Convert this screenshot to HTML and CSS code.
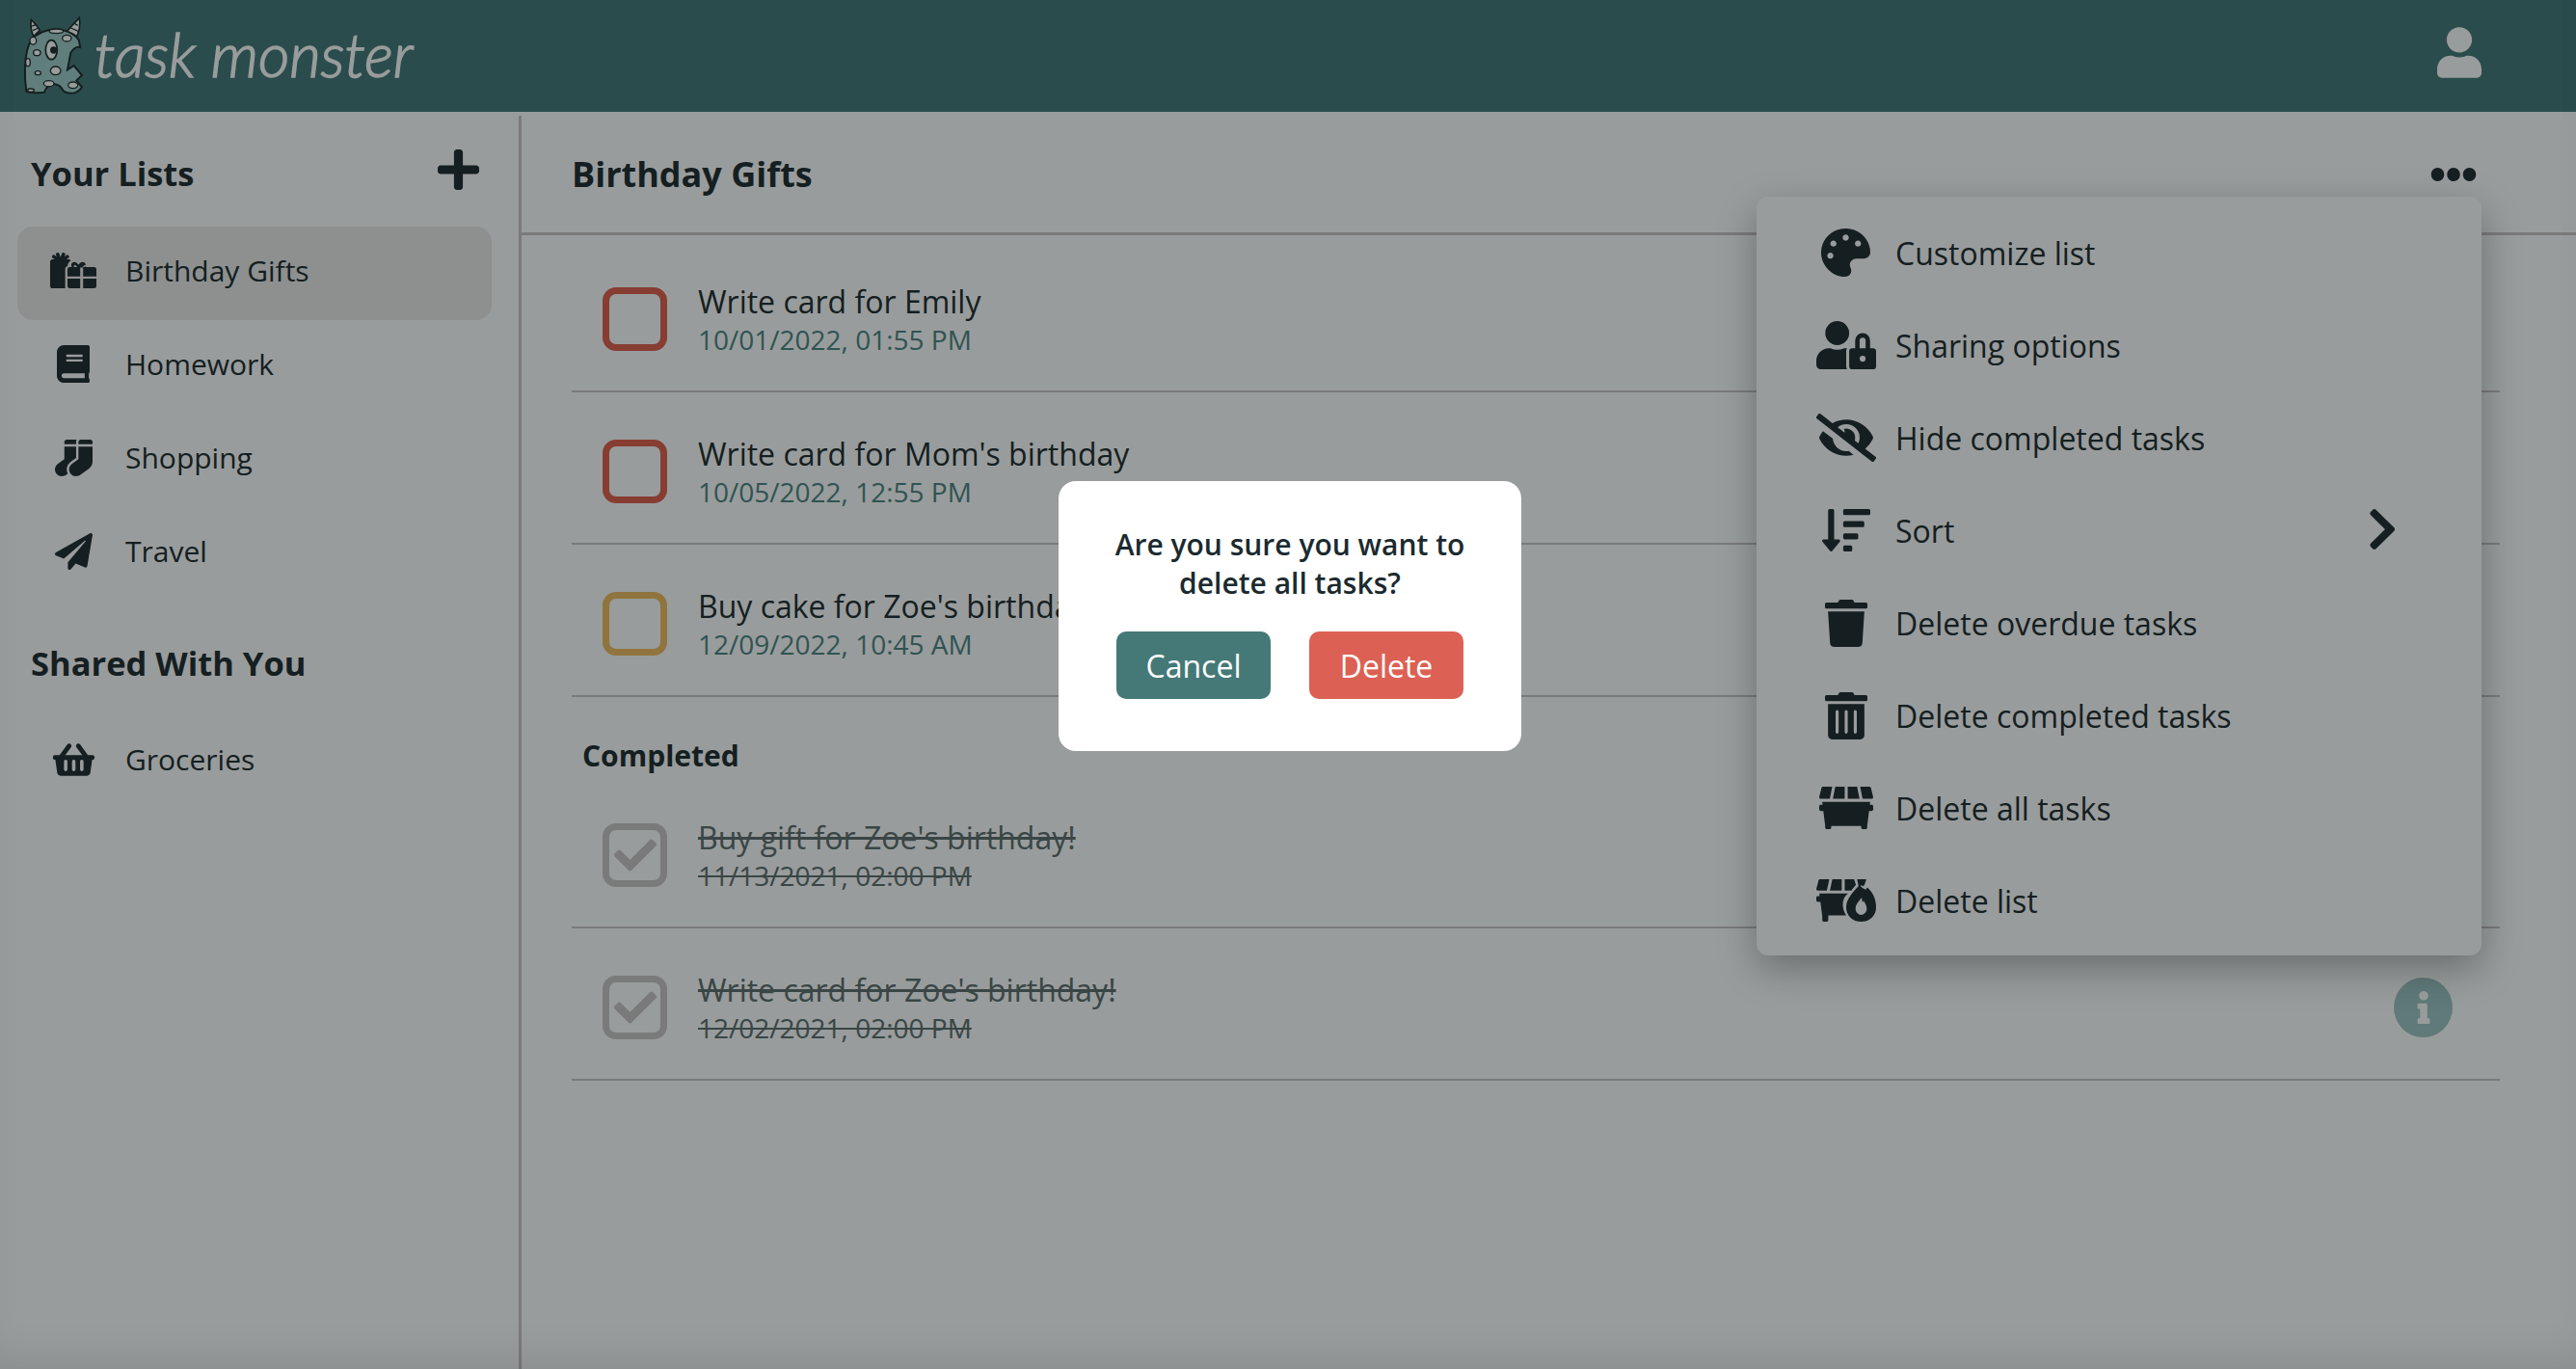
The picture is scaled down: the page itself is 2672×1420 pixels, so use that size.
FILE: index.html
```html
<!DOCTYPE html>
<html lang="en">
<head>
<meta charset="utf-8">
<title>Task Monster</title>
<link rel="stylesheet" href="styles.css">
</head>
<body>
<div class="app">
  <header class="topbar">
    <div class="brand">
      <svg class="monster" viewBox="0 0 240 270">
        <path class="m-spot m-line" d="M37 22C34 40 38 65 45 74L64 55C56 42 46 30 37 22Z"/>
        <path class="m-spot m-line" d="M187 16C170 35 155 50 146 62L175 80C188 60 191 40 187 16Z"/>
        <path class="m-stripe" d="M40 42L52 38M42 56L60 48M172 34L182 40M160 48L184 58"/>
        <path class="m-body" d="M30 100C40 75 60 62 90 55C120 48 165 55 185 85L190 108C178 104 168 112 160 125L150 178L170 165L195 195L178 212L195 232C185 250 160 258 138 245C130 232 125 225 110 223C95 222 85 228 78 248C60 250 35 252 22 245C15 200 15 140 30 100Z"/>
        <ellipse class="m-spot m-line2" cx="115" cy="58" rx="22" ry="7"/>
        <ellipse class="m-spot m-line2" cx="148" cy="80" rx="14" ry="10"/>
        <ellipse class="m-spot m-line2" cx="43" cy="88" rx="10" ry="12"/>
        <ellipse class="m-spot m-line2" cx="55" cy="125" rx="11" ry="9"/>
        <ellipse class="m-spot m-line2" cx="58" cy="188" rx="9" ry="6"/>
        <ellipse class="m-spot m-line2" cx="113" cy="181" rx="16" ry="13"/>
        <ellipse class="m-spot m-line2" cx="27" cy="155" rx="7" ry="12"/>
        <ellipse class="m-spot m-line2" cx="92" cy="221" rx="16" ry="9"/>
        <ellipse class="m-spot m-line2" cx="167" cy="226" rx="15" ry="10"/>
        <ellipse class="m-spot m-line2" cx="36" cy="242" rx="10" ry="5"/>
        <ellipse class="m-spot m-line" cx="100" cy="116" rx="18" ry="30"/>
        <circle class="m-pupil" cx="107" cy="117" r="11"/>
      </svg>
      <span class="wordmark">task monster</span>
    </div>
    <svg class="ic-user" viewBox="0 0 448 512"><path d="M224 256c70.7 0 128-57.3 128-128S294.7 0 224 0 96 57.3 96 128s57.3 128 128 128zm89.6 32h-16.7c-22.2 10.2-46.9 16-72.9 16s-50.6-5.8-72.9-16h-16.7C60.2 288 0 348.2 0 422.4V464c0 26.5 21.5 48 48 48h352c26.5 0 48-21.5 48-48v-41.6c0-74.2-60.2-134.4-134.4-134.4z"/></svg>
  </header>

  <div class="workspace">
    <aside class="sidebar">
      <div class="side-head">
        <h2 class="side-title">Your Lists</h2>
        <svg class="ic-plus" viewBox="0 0 448 512" preserveAspectRatio="none"><path d="M416 208H272V64c0-17.67-14.33-32-32-32h-32c-17.67 0-32 14.33-32 32v144H32c-17.67 0-32 14.33-32 32v32c0 17.67 14.33 32 32 32h144v144c0 17.67 14.33 32 32 32h32c17.67 0 32-14.33 32-32V304h144c17.67 0 32-14.33 32-32v-32c0-17.67-14.33-32-32-32z"/></svg>
      </div>
      <div class="side-row is-active">
        <span class="side-icon"><svg class="ic-gifts" viewBox="0 0 640 512" preserveAspectRatio="none">
          <path d="M240.6 194.1c1.9-30.8 17.3-61.2 44-79.8C279.4 103.5 268.7 96 256 96h-29.4l30.7-22c7.2-5.1 8.9-15.1 3.7-22.3l-9.3-13c-5.1-7.2-15.1-8.9-22.3-3.7l-32 22.9 11.5-30.6c3.1-8.3-1.1-17.5-9.4-20.6l-15-5.6c-8.3-3.1-17.5 1.1-20.6 9.4l-19.9 53-19.9-53c-3.1-8.3-12.3-12.5-20.6-9.4l-15 5.6c-8.3 3.1-12.5 12.3-9.4 20.6l11.5 30.6-32-22.9c-7.2-5.1-17.2-3.5-22.3 3.7l-9.3 13c-5.1 7.2-3.5 17.2 3.7 22.3l30.7 22H32c-17.7 0-32 14.3-32 32v352c0 17.7 14.3 32 32 32h178.3c-1.4-5.1-2.3-10.4-2.3-16V240c0-20 12-37 32.6-45.9z"/>
          <path fill-rule="evenodd" d="M240 342V240a32 32 0 0 1 32-32h28c-8-14-10-30-4-46 10-26 44-36 68-16l28 26 28-26c24-20 58-10 68 16 6 16 4 32-4 46h124a32 32 0 0 1 32 32v102H456V216h-40v126zM344 208h32l-24-24c-10-8-24 0-24 12 0 5 4 9 16 12zM480 208h-32l24-24c10-8 24 0 24 12 0 5-4 9-16 12z"/>
          <path d="M240 374h176v138H272a32 32 0 0 1-32-32zM456 374h184v106a32 32 0 0 1-32 32H456z"/>
        </svg></span>
        <span class="side-label">Birthday Gifts</span>
      </div>
      <div class="side-row">
        <span class="side-icon"><svg class="ic-book" viewBox="0 0 448 512" preserveAspectRatio="none"><path d="M448 360V24c0-13.3-10.7-24-24-24H96C43 0 0 43 0 96v320c0 53 43 96 96 96h328c13.3 0 24-10.7 24-24v-16c0-7.5-3.5-14.3-8.9-18.7-4.2-15.4-4.2-59.3 0-74.7 5.4-4.3 8.9-11.1 8.9-18.6zM128 134c0-3.3 2.7-6 6-6h212c3.3 0 6 2.7 6 6v20c0 3.3-2.7 6-6 6H134c-3.3 0-6-2.7-6-6v-20zm0 64c0-3.3 2.7-6 6-6h212c3.3 0 6 2.7 6 6v20c0 3.3-2.7 6-6 6H134c-3.3 0-6-2.7-6-6v-20zm253.4 250H96c-17.7 0-32-14.3-32-32 0-17.6 14.4-32 32-32h285.4c-1.9 17.1-1.9 46.9 0 64z"/></svg></span>
        <span class="side-label">Homework</span>
      </div>
      <div class="side-row">
        <span class="side-icon"><svg class="ic-socks" viewBox="0 0 512 512" preserveAspectRatio="none"><path d="M214.66 311.01L288 256V96H128v176l-86.65 64.61c-39.4 29.56-53.86 84.42-29.21 127.06C30.39 495.25 63.27 512 96.08 512c20.03 0 40.25-6.25 57.52-19.2l21.86-16.39c-29.85-55.38-13.54-125.84 39.2-165.4zM288 32c0-11.05 3.07-21.3 8.02-30.38C293.4.92 290.85 0 288 0H160c-17.67 0-32 14.33-32 32v32h160V32zM480 0H352c-17.67 0-32 14.33-32 32v32h192V32c0-17.67-14.33-32-32-32zM320 272l-86.13 64.61c-39.4 29.56-53.86 84.42-29.21 127.06 18.25 31.58 50.61 48.33 83.42 48.33 20.03 0 40.25-6.25 57.52-19.2l115.2-86.4A127.997 127.997 0 0 0 512 304V96H320v176z"/></svg></span>
        <span class="side-label">Shopping</span>
      </div>
      <div class="side-row">
        <span class="side-icon"><svg class="ic-plane" viewBox="0 0 512 512" preserveAspectRatio="none"><path d="M476 3.2L12.5 270.6c-18.1 10.4-15.8 35.6 2.2 43.2L121 358.4l287.3-253.2c5.5-4.9 13.3 2.6 8.6 8.3L176 407v80.5c0 23.6 28.5 32.9 42.5 15.8L282 426l124.6 52.2c14.2 6 30.4-2.9 33-18.2l72-432C515 7.8 493.3-6.8 476 3.2z"/></svg></span>
        <span class="side-label">Travel</span>
      </div>
      <div class="side-head side-head-shared">
        <h2 class="side-title">Shared With You</h2>
      </div>
      <div class="side-row">
        <span class="side-icon"><svg class="ic-basket" viewBox="0 0 576 512" preserveAspectRatio="none"><path d="M576 216v16c0 13.255-10.745 24-24 24h-8l-26.113 182.788C514.509 462.435 494.257 480 470.37 480H105.63c-23.887 0-44.139-17.565-47.518-41.212L32 256h-8c-13.255 0-24-10.745-24-24v-16c0-13.255 10.745-24 24-24h67.341l106.78-146.821c10.395-14.292 30.407-17.453 44.701-7.058 14.293 10.395 17.453 30.408 7.058 44.701L170.477 192h235.046L326.12 82.821c-10.395-14.292-7.234-34.306 7.059-44.701 14.291-10.395 34.306-7.235 44.701 7.058L484.659 192H552c13.255 0 24 10.745 24 24zM312 392V280c0-13.255-10.745-24-24-24s-24 10.745-24 24v112c0 13.255 10.745 24 24 24s24-10.745 24-24zm112 0V280c0-13.255-10.745-24-24-24s-24 10.745-24 24v112c0 13.255 10.745 24 24 24s24-10.745 24-24zm-224 0V280c0-13.255-10.745-24-24-24s-24 10.745-24 24v112c0 13.255 10.745 24 24 24s24-10.745 24-24z"/></svg></span>
        <span class="side-label">Groceries</span>
      </div>
    </aside>

    <main class="main">
      <div class="main-head">
        <h1 class="main-title">Birthday Gifts</h1>
        <svg class="ic-dots" viewBox="0 0 512 144" preserveAspectRatio="none"><path d="M328 72c0 39.8-32.2 72-72 72s-72-32.2-72-72 32.2-72 72-72 72 32.2 72 72zM432 0c-39.8 0-72 32.2-72 72s32.2 72 72 72 72-32.2 72-72-32.2-72-72-72zM80 0C40.2 0 8 32.2 8 72s32.2 72 72 72 72-32.2 72-72S119.8 0 80 0z"/></svg>
      </div>
      <div class="tasks">
        <div class="task">
          <span class="box box-red"></span>
          <div class="task-text"><div class="task-name">Write card for Emily</div><div class="task-date">10/01/2022, 01:55 PM</div></div>
        </div>
        <div class="task">
          <span class="box box-red"></span>
          <div class="task-text"><div class="task-name">Write card for Mom's birthday</div><div class="task-date">10/05/2022, 12:55 PM</div></div>
        </div>
        <div class="task">
          <span class="box box-yellow"></span>
          <div class="task-text"><div class="task-name">Buy cake for Zoe's birthday</div><div class="task-date">12/09/2022, 10:45 AM</div></div>
        </div>
        <h3 class="done-title">Completed</h3>
        <div class="task is-done">
          <span class="box box-done"><svg class="ic-check" viewBox="0 0 512 512"><path d="M173.898 439.404l-166.4-166.4c-9.997-9.997-9.997-26.206 0-36.204l36.203-36.204c9.997-9.998 26.207-9.998 36.204 0L192 312.69 432.095 72.596c9.997-9.997 26.207-9.997 36.204 0l36.203 36.204c9.997 9.997 9.997 26.206 0 36.204l-294.4 294.401c-9.998 9.997-26.207 9.997-36.204-.001z"/></svg></span>
          <div class="task-text"><div class="task-name">Buy gift for Zoe's birthday!</div><div class="task-date">11/13/2021, 02:00 PM</div></div>
        </div>
        <div class="task is-done">
          <span class="box box-done"><svg class="ic-check" viewBox="0 0 512 512"><path d="M173.898 439.404l-166.4-166.4c-9.997-9.997-9.997-26.206 0-36.204l36.203-36.204c9.997-9.998 26.207-9.998 36.204 0L192 312.69 432.095 72.596c9.997-9.997 26.207-9.997 36.204 0l36.203 36.204c9.997 9.997 9.997 26.206 0 36.204l-294.4 294.401c-9.998 9.997-26.207 9.997-36.204-.001z"/></svg></span>
          <div class="task-text"><div class="task-name">Write card for Zoe's birthday!</div><div class="task-date">12/02/2021, 02:00 PM</div></div>
          <span class="info"><svg class="ic-info" viewBox="0 0 192 512"><path d="M20 424.229h20V279.771H20c-11.046 0-20-8.954-20-20V212c0-11.046 8.954-20 20-20h112c11.046 0 20 8.954 20 20v212.229h20c11.046 0 20 8.954 20 20V492c0 11.046-8.954 20-20 20H20c-11.046 0-20-8.954-20-20v-47.771c0-11.046 8.954-20 20-20zM96 0C56.235 0 24 32.235 24 72s32.235 72 72 72 72-32.235 72-72S135.764 0 96 0z"/></svg></span>
        </div>
      </div>
    </main>
  </div>

  <nav class="menu">
    <div class="menu-row"><span class="menu-icon"><svg class="mi-palette" viewBox="0 0 512 512" preserveAspectRatio="none"><path d="M204.3 5C104.9 24.4 24.8 104.3 5.2 203.4c-37 187 131.7 326.4 258.8 306.7 41.2-6.4 61.4-54.6 42.5-91.7-23.1-45.4 9.9-98.4 60.9-98.4h79.7c35.8 0 64.8-29.6 64.9-65.3C511.5 97.1 368.1-26.9 204.3 5zM96 320c-17.7 0-32-14.3-32-32s14.3-32 32-32 32 14.3 32 32-14.3 32-32 32zm32-128c-17.7 0-32-14.3-32-32s14.3-32 32-32 32 14.3 32 32-14.3 32-32 32zm128-64c-17.7 0-32-14.3-32-32s14.3-32 32-32 32 14.3 32 32-14.3 32-32 32zm128 64c-17.7 0-32-14.3-32-32s14.3-32 32-32 32 14.3 32 32-14.3 32-32 32z"/></svg></span><span>Customize list</span></div>
    <div class="menu-row"><span class="menu-icon"><svg class="mi-wide" viewBox="0 0 640 512" preserveAspectRatio="none"><path d="M224 256A128 128 0 1 0 96 128a128 128 0 0 0 128 128zm96 64a63.08 63.08 0 0 1 8.1-30.5c-4.8-.5-9.5-1.5-14.5-1.5h-16.7a174.08 174.08 0 0 1-145.8 0h-16.7A134.43 134.43 0 0 0 0 422.4V464a48 48 0 0 0 48 48h280.9a63.54 63.54 0 0 1-8.9-32zm288-32h-32v-80a80 80 0 0 0-160 0v80h-32a32 32 0 0 0-32 32v160a32 32 0 0 0 32 32h224a32 32 0 0 0 32-32V320a32 32 0 0 0-32-32zM496 432a32 32 0 1 1 32-32 32 32 0 0 1-32 32zm32-144h-64v-80a32 32 0 0 1 64 0z"/></svg></span><span>Sharing options</span></div>
    <div class="menu-row"><span class="menu-icon"><svg class="mi-wide" viewBox="0 0 640 512" preserveAspectRatio="none"><path d="M320 400c-75.85 0-137.25-58.71-142.9-133.11L72.2 185.82c-13.79 17.3-26.48 35.59-36.72 55.59a32.35 32.35 0 0 0 0 29.19C89.71 376.41 197.07 448 320 448c26.91 0 52.87-4 77.89-10.46L346 397.39a144.13 144.13 0 0 1-26 2.61zm313.82 58.1l-110.55-85.44a331.25 331.25 0 0 0 81.25-102.07 32.35 32.35 0 0 0 0-29.19C550.29 135.59 442.93 64 320 64a308.15 308.15 0 0 0-147.32 37.7L45.46 3.37A16 16 0 0 0 23 6.18L3.37 31.45A16 16 0 0 0 6.18 53.9l588.36 454.73a16 16 0 0 0 22.46-2.81l19.64-25.27a16 16 0 0 0-2.82-22.45zm-183.72-142l-39.3-30.38A94.75 94.75 0 0 0 416 256a94.76 94.76 0 0 0-121.31-92.21A47.65 47.65 0 0 1 304 192a46.64 46.64 0 0 1-1.54 10l-73.61-56.89A142.31 142.31 0 0 1 320 112a143.92 143.92 0 0 1 144 144c0 21.63-5.29 41.79-13.9 60.11z"/></svg></span><span>Hide completed tasks</span></div>
    <div class="menu-row"><span class="menu-icon"><svg class="mi-sort" viewBox="0 32 512 448" preserveAspectRatio="none"><path d="M304 416h-64a16 16 0 0 0-16 16v32a16 16 0 0 0 16 16h64a16 16 0 0 0 16-16v-32a16 16 0 0 0-16-16zm-128-64h-48V48a16 16 0 0 0-16-16H80a16 16 0 0 0-16 16v304H16c-14.19 0-21.37 17.24-11.29 27.31l80 96a16 16 0 0 0 22.62 0l80-96C197.35 369.26 190.22 352 176 352zm256-192H240a16 16 0 0 0-16 16v32a16 16 0 0 0 16 16h192a16 16 0 0 0 16-16v-32a16 16 0 0 0-16-16zm-64 128H240a16 16 0 0 0-16 16v32a16 16 0 0 0 16 16h128a16 16 0 0 0 16-16v-32a16 16 0 0 0-16-16zM496 32H240a16 16 0 0 0-16 16v32a16 16 0 0 0 16 16h256a16 16 0 0 0 16-16V48a16 16 0 0 0-16-16z"/></svg></span><span class="menu-grow">Sort</span><svg class="mi-chevron" viewBox="24 37 268 438" preserveAspectRatio="none"><path d="M285.476 272.971L91.132 467.314c-9.373 9.373-24.569 9.373-33.941 0l-22.667-22.667c-9.357-9.357-9.375-24.522-.04-33.901L188.505 256 34.484 101.255c-9.335-9.379-9.317-24.544.04-33.901l22.667-22.667c9.373-9.373 24.569-9.373 33.941 0L285.475 239.03c9.373 9.372 9.373 24.568.001 33.941z"/></svg></div>
    <div class="menu-row"><span class="menu-icon"><svg class="mi-trash" viewBox="0 0 448 512" preserveAspectRatio="none"><path d="M432 32H312l-9.4-18.7A24 24 0 0 0 281.1 0H166.8a23.72 23.72 0 0 0-21.4 13.3L136 32H16A16 16 0 0 0 0 48v32a16 16 0 0 0 16 16h416a16 16 0 0 0 16-16V48a16 16 0 0 0-16-16zM53.2 467a48 48 0 0 0 47.9 45h245.8a48 48 0 0 0 47.9-45L416 128H32z"/></svg></span><span>Delete overdue tasks</span></div>
    <div class="menu-row"><span class="menu-icon"><svg class="mi-trash" viewBox="0 0 448 512" preserveAspectRatio="none"><path d="M32 464a48 48 0 0 0 48 48h288a48 48 0 0 0 48-48V128H32zm272-256a16 16 0 0 1 32 0v224a16 16 0 0 1-32 0zm-96 0a16 16 0 0 1 32 0v224a16 16 0 0 1-32 0zm-96 0a16 16 0 0 1 32 0v224a16 16 0 0 1-32 0zM432 32H312l-9.4-18.7A24 24 0 0 0 281.1 0H166.8a23.72 23.72 0 0 0-21.4 13.3L136 32H16A16 16 0 0 0 0 48v32a16 16 0 0 0 16 16h416a16 16 0 0 0 16-16V48a16 16 0 0 0-16-16z"/></svg></span><span>Delete completed tasks</span></div>
    <div class="menu-row"><span class="menu-icon"><svg class="mi-dumpster" viewBox="0 32 576 448" preserveAspectRatio="none"><path d="M560 160c10.4 0 18-9.8 15.5-19.9l-24-96C549.7 37 543.3 32 536 32h-98.9l25.6 128H560zM272 32H171.5l-25.6 128H272V32zm132.5 0H304v128h126.1L404.5 32zM16 160h97.3l25.6-128H40c-7.3 0-13.7 5-15.5 12.1l-24 96C-2 150.2 5.6 160 16 160zm544 64h-20l4-32H32l4 32H16c-8.8 0-16 7.2-16 16v32c0 8.8 7.2 16 16 16h28l20 160v16c0 8.8 7.2 16 16 16h32c8.8 0 16-7.2 16-16v-16h320v16c0 8.8 7.2 16 16 16h32c8.8 0 16-7.2 16-16v-16l20-160h28c8.8 0 16-7.2 16-16v-32c0-8.8-7.2-16-16-16z"/></svg></span><span>Delete all tasks</span></div>
    <div class="menu-row"><span class="menu-icon"><svg class="mi-fire" viewBox="0 32 640 480" preserveAspectRatio="none">
      <path d="M16 160h97.3l25.6-128H40c-7.3 0-13.7 5-15.5 12.1l-24 96C-2 150.2 5.6 160 16 160zM272 32H171.5l-25.6 128H272zM404.5 32H304v128h70c15-20 35-45 50-66zM536 32h-98.9l20 100c8-6 18-20 26-34l14 12 8-6 8 0z"/>
      <path d="M32 192H340C305 220 290 255 285 295C280 340 290 400 320 440H128v56a16 16 0 0 1-16 16H80a16 16 0 0 1-16-16v-40L44 288H16a16 16 0 0 1-16-16v-32a16 16 0 0 1 16-16h20z"/>
      <path fill-rule="evenodd" d="M470 90C475 130 500 130 530 150L545 125C600 170 640 250 640 350C640 440 575 512 480 512C385 512 320 440 320 350C320 250 400 170 470 90zM485 240C455 285 420 315 420 365C420 405 450 435 480 435C510 435 540 405 540 365C540 325 520 305 508 275L494 295z"/>
    </svg></span><span>Delete list</span></div>
  </nav>

  <div class="backdrop"></div>

  <section class="dialog">
    <p class="dialog-text">Are you sure you want to delete all tasks?</p>
    <div class="dialog-actions">
      <button class="btn btn-cancel">Cancel</button>
      <button class="btn btn-delete">Delete</button>
    </div>
  </section>
</div>
</body>
</html>
```
FILE: styles.css
```css
* { box-sizing: border-box; }
html, body { margin: 0; padding: 0; }
body { background: #fff; color: #242f33; font-family: "Open Sans", "Liberation Sans", sans-serif; overflow: hidden; }
svg { display: block; fill: currentColor; }
h1, h2, h3, p { margin: 0; }

.app { position: relative; width: 2672px; height: 1420px; display: flex; flex-direction: column; overflow: hidden; }

.topbar { height: 116px; flex: none; background: #497b7b; color: #fff; display: flex; align-items: center; justify-content: space-between; padding-right: 98px; }
.brand { display: flex; align-items: center; padding-left: 20px; }
.monster { width: 80px; height: 90px; }
.m-body { fill: #9fcdca; stroke: #242f30; stroke-width: 6; }
.m-spot { fill: #fff; }
.m-line { stroke: #242f30; stroke-width: 5; }
.m-line2 { stroke: #242f30; stroke-width: 4; }
.m-stripe { fill: none; stroke: #242f30; stroke-width: 4; }
.m-pupil { fill: #242f30; }
.wordmark { font-family: "Lato", sans-serif; font-style: italic; font-weight: 300; font-size: 63px; line-height: 1; margin-left: -2px; padding-bottom: 6px; color: #fff; -webkit-text-stroke: 1.5px #fff; }
.ic-user { width: 46px; height: 53px; margin-top: -8px; }

.workspace { flex: 1; display: flex; min-height: 0; }

.sidebar { width: 541px; flex: none; margin-top: 4px; border-right: 3px solid #cbc6c9; }
.side-head { height: 115px; display: flex; align-items: center; justify-content: space-between; padding: 4px 41px 0 32px; }
.side-head-shared { height: 119px; padding-top: 10px; }
.side-title { font-size: 34.5px; font-weight: 700; line-height: 1.2; }
.ic-plus { width: 43px; height: 48px; margin-top: -7px; }
.side-row { height: 97px; width: 492px; margin-left: 18px; padding: 0 0 6px 17px; display: flex; align-items: center; border-radius: 16px; }
.side-row.is-active { background: #edebe9; }
.side-icon { width: 82px; margin-right: 13px; flex: none; display: flex; justify-content: center; }
.side-label { font-size: 30px; }
.ic-gifts { width: 48px; height: 37px; }
.ic-book { width: 34px; height: 39px; }
.ic-socks { width: 39px; height: 38px; }
.ic-plane { width: 39px; height: 38px; }
.ic-basket { width: 43px; height: 38px; }

.main { flex: 1; min-width: 0; display: flex; flex-direction: column; }
.main-head { height: 124px; margin-top: 4px; flex: none; border-bottom: 3px solid #cbc6c9; display: flex; align-items: center; justify-content: space-between; padding: 0 103px 0 52px; }
.main-title { font-size: 36px; font-weight: 700; line-height: 1.2; }
.ic-dots { width: 48px; height: 14px; }

.tasks { padding-top: 5px; margin: 0 79px 0 52px; }
.task { height: 158px; padding: 8px 49px 0 32px; display: flex; align-items: center; border-bottom: 2px solid #cbc6c9; }
.box { width: 67px; height: 66px; flex: none; border: 7px solid; border-radius: 14px; margin-right: 32px; display: flex; align-items: center; justify-content: center; }
.box-red { border-color: #e2614f; }
.box-yellow { border-color: #f0bc62; }
.box-done { border-color: #cbc6c9; color: #cbc6c9; }
.ic-check { width: 44px; height: 44px; flex: none; }
.task-text { flex: 1; min-width: 0; white-space: nowrap; padding-top: 3px; }
.task-name { font-size: 32px; line-height: 40px; }
.task-date { font-size: 28px; line-height: 39px; color: #4f8784; }
.is-done .task-name, .is-done .task-date { color: #617171; text-decoration: line-through; }
.done-title { height: 82px; padding: 38px 0 0 11px; font-size: 30px; font-weight: 700; line-height: 45px; }
.info { width: 61px; height: 62px; flex: none; border-radius: 50%; background: #9ec6c3; color: #fff; display: flex; align-items: center; justify-content: center; }
.ic-info { width: 14px; height: 34px; }

.menu { position: absolute; left: 1822px; top: 204px; width: 752px; height: 787px; padding-top: 15px; display: flex; flex-direction: column; gap: 10px; background: #fff; border-radius: 12px; box-shadow: 0 14px 40px rgba(0, 0, 0, 0.3); font-size: 32px; }
.menu-row { height: 86px; flex: none; padding: 0 90px 0 41px; display: flex; align-items: center; }
.menu-icon { width: 103px; flex: none; display: flex; justify-content: center; }
.menu-grow { flex: 1; }
.mi-palette { width: 51px; height: 50px; }
.mi-wide { width: 62px; height: 50px; }
.mi-sort { width: 50px; height: 44px; }
.mi-trash { width: 44px; height: 49px; }
.mi-dumpster { width: 56px; height: 44px; }
.mi-fire { width: 62px; height: 44px; }
.mi-chevron { width: 26px; height: 42px; margin-top: -2px; }

.backdrop { position: absolute; inset: 0; background: rgba(0, 8, 8, 0.4); box-shadow: inset 0 -30px 40px -20px rgba(0, 0, 0, 0.1); }

.dialog { position: absolute; left: 1098px; top: 499px; width: 480px; height: 280px; padding: 46px 50px 0; background: #fff; border-radius: 18px; color: #1b2a2f; text-align: center; }
.dialog-text { font-size: 30px; font-weight: 600; line-height: 40px; }
.dialog-actions { display: flex; justify-content: center; gap: 40px; margin-top: 30px; }
.btn { width: 160px; height: 70px; border: 0; border-radius: 10px; color: #fff; font-family: inherit; font-size: 32px; padding: 0; }
.btn-cancel { background: #457977; }
.btn-delete { background: #dc6154; }
```
